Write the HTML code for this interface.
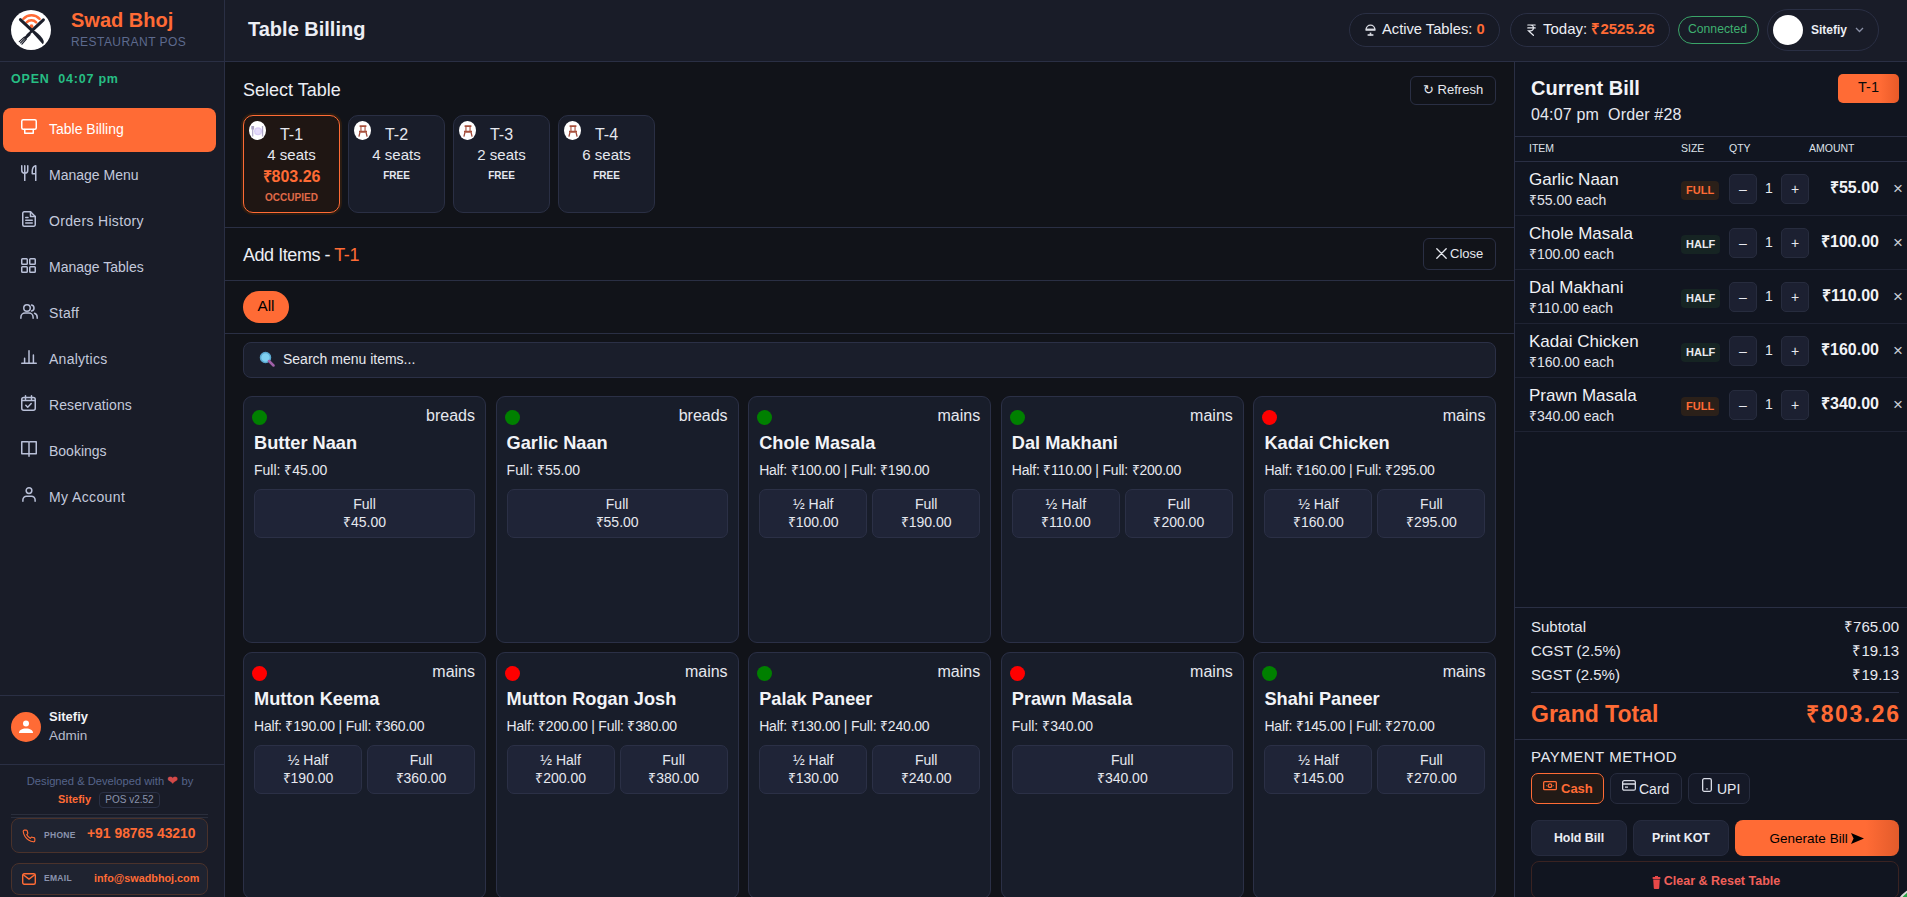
<!DOCTYPE html>
<html><head><meta charset="utf-8">
<style>
*{box-sizing:border-box;margin:0;padding:0}
html,body{width:1907px;height:897px;overflow:hidden;background:#111319;font-family:"Liberation Sans",sans-serif;color:#e6e8ef}
.abs{position:absolute}
#side{position:absolute;left:0;top:0;width:225px;height:897px;background:#191c28;border-right:1px solid #2a2f44}
#hdr{position:absolute;left:225px;top:0;width:1682px;height:62px;background:#191c28;border-bottom:1px solid #2a2f44}
#main{position:absolute;left:225px;top:62px;width:1290px;height:835px;background:#111319}
#right{position:absolute;left:1514px;top:62px;width:393px;height:835px;background:#111520;border-left:1px solid #2a2f44}
.nav{position:absolute;left:3px;width:213px;height:44px;border-radius:8px;color:#c3c9dc;font-size:14px}
.nav svg{position:absolute;left:18px;top:14px}
.nav span{position:absolute;left:46px;top:13px;line-height:16px}
.nav.act{background:#ff6b35;color:#fff}
.line{position:absolute;height:1px;background:#2a2f44}
.pill{position:absolute;border:1px solid #2a2f44;border-radius:20px}
.tcard{position:absolute;top:115px;width:97px;height:98px;border:1px solid #2a2f44;border-radius:10px;background:#191d2a;text-align:center}
.tcard .ic{position:absolute;left:5px;top:4.5px;width:17px;height:19.5px;border-radius:50%;background:#fff}
.tcard .tn{position:absolute;left:0;right:0;top:10px;font-size:16px;line-height:18px}
.tcard .ts{position:absolute;left:0;right:0;top:30px;font-size:15px;line-height:18px}
.tcard .tf{position:absolute;left:0;right:0;top:53.5px;font-size:10px;font-weight:bold;line-height:12px}
.mcard{position:absolute;width:243px;height:247px;border:1px solid #2b3046;border-radius:9px;background:#181d2a}
.mcard .dot{position:absolute;left:8px;top:13px;width:15px;height:15px;border-radius:50%;background:#008000}
.mcard .dot.nv{background:#ff0000}
.mcard .cat{position:absolute;right:10px;top:10px;font-size:16px;line-height:18px;color:#e6e8ef}
.mcard .nm{position:absolute;left:10px;top:34.5px;font-size:18.2px;font-weight:bold;line-height:22px;color:#f2f3f7}
.mcard .pr{position:absolute;left:10px;top:65px;font-size:14px;line-height:17px;color:#e6e8ef}
.mcard .opt{position:absolute;top:92px;height:49px;border:1px solid #2b3046;border-radius:7px;background:#1f2437;text-align:center;font-size:14px;line-height:18px;padding-top:4.5px;color:#e6e8ef}
.row{position:absolute;left:0;width:392px;height:54px;border-bottom:1px solid #1f2333}
.row .n{position:absolute;left:14px;top:9px;font-size:17px;line-height:18px;color:#f0f1f5}
.row .e{position:absolute;left:14px;top:30px;font-size:14px;line-height:16px;color:#e0e2ea}
.row .bd{position:absolute;left:166px;top:19px;height:19px;border-radius:4px;font-size:11px;font-weight:bold;line-height:19px;padding:0 5px}
.row .bd.f{background:#2b2019;color:#ff6b35}
.row .bd.h{background:#162423;color:#e8eaee}
.row .qb{position:absolute;top:12px;width:28px;height:30px;border:1px solid #272c3e;border-radius:5px;background:#1c2031;text-align:center;line-height:28px;font-size:14px;color:#e6e8ef}
.row .q{position:absolute;left:250px;top:18px;font-size:14px;line-height:16px}
.row .am{position:absolute;right:28px;top:17px;font-size:16px;font-weight:bold;line-height:18px;color:#f2f3f7}
.row .x{position:absolute;right:4px;top:18px;font-size:17px;line-height:18px;color:#c9ccd6}
.btn{position:absolute;border:1px solid #2a2f44;border-radius:6px}
</style></head><body>

<div id="side">
  <svg class="abs" style="left:11px;top:10px" width="40" height="40" viewBox="0 0 40 40">
<circle cx="20" cy="20" r="20" fill="#fff"/>
<g fill="none" stroke="#ff6b35" stroke-linecap="round"><path d="M12.4 8.8a11.2 11.2 0 0 1 16.2 0" stroke-width="2.5"/><path d="M15.6 12.3a6.7 6.7 0 0 1 9.6 0" stroke-width="2.5"/></g>
<circle cx="20.5" cy="16.2" r="1.9" fill="#ff6b35"/>
<g stroke="#1c1f2b" stroke-linecap="round" fill="none"><path d="M9.4 9.6L21.2 20.6" stroke-width="3"/><path d="M32.4 9.8L21.2 20.4" stroke-width="3"/><path d="M20.8 21.2L16.6 25.2" stroke-width="2.4"/></g>
<path d="M20.4 21.4L23.6 20.8C27.8 24 31.6 27.4 32.6 30.8C33 32.4 32.6 33.6 31.8 34.2Z" fill="#1c1f2b"/>
<path d="M17.8 22.8L19.8 24.8L14.8 29.6L12.8 27.6Z" fill="#1c1f2b"/>
<g stroke="#1c1f2b" stroke-width="1.25" stroke-linecap="round"><path d="M13.3 27.1L8.3 31.6M14.3 28.1L9.6 32.9M15.3 29.1L10.9 34.1"/></g>
</svg>

  <div class="abs" style="left:71px;top:7px;font-size:20px;font-weight:bold;color:#ff6b35;line-height:26px">Swad Bhoj</div>
  <div class="abs" style="left:71px;top:35px;font-size:12px;color:#5d6a8e;letter-spacing:0.45px;line-height:14px">RESTAURANT POS</div>
  <div class="line" style="left:0;top:61px;width:225px"></div>
  <div class="abs" style="left:11px;top:72px;font-size:12.5px;font-weight:bold;color:#27be84;letter-spacing:0.8px;line-height:14px">OPEN&nbsp; 04:07 pm</div>
  <div class="nav act" style="top:108px"><span>Table Billing</span></div>
  <div class="nav" style="top:154px"><span>Manage Menu</span></div>
  <div class="nav" style="top:200px"><span style="letter-spacing:0.33px">Orders History</span></div>
  <div class="nav" style="top:246px"><span>Manage Tables</span></div>
  <div class="nav" style="top:292px"><span style="letter-spacing:0.35px">Staff</span></div>
  <div class="nav" style="top:338px"><span style="letter-spacing:0.27px">Analytics</span></div>
  <div class="nav" style="top:384px"><span style="letter-spacing:0.10px">Reservations</span></div>
  <div class="nav" style="top:430px"><span>Bookings</span></div>
  <div class="nav" style="top:476px"><span style="letter-spacing:0.38px">My Account</span></div>
<svg class="abs" style="left:21px;top:119px" width="16" height="15" viewBox="0 0 16 15" fill="none" stroke="#fff" stroke-width="1.5" stroke-linecap="round" stroke-linejoin="round"><rect x="0.75" y="0.75" width="14.5" height="9.5" rx="1.5"/><path d="M3.75 10.5v3.75h8.5V10.5"/></svg>
<svg class="abs" style="left:21px;top:165px" width="16" height="16" viewBox="0 0 16 16" fill="none" stroke="#b9c0d8" stroke-width="1.5" stroke-linecap="round" stroke-linejoin="round"><path d="M0.75 0.75v4.5a3 3 0 0 0 6 0v-4.5M3.75 0.75V15.5M14.75 15.5V0.75c-2.2 0.6-3.5 2.6-3.5 5.5v2.5h3.5"/></svg>
<svg class="abs" style="left:22px;top:211px" width="14" height="16" viewBox="0 0 14 16" fill="none" stroke="#b9c0d8" stroke-width="1.5" stroke-linecap="round" stroke-linejoin="round"><path d="M0.75 2.25a1.5 1.5 0 0 1 1.5-1.5h6.25l4.75 4.75v8.25a1.5 1.5 0 0 1-1.5 1.5H2.25a1.5 1.5 0 0 1-1.5-1.5z"/><path d="M8.5 0.75v4.75h4.75M3.75 6.5h2.25M3.75 9.25h6.5M3.75 12h6.5"/></svg>
<svg class="abs" style="left:21px;top:258px" width="15" height="15" viewBox="0 0 15 15" fill="none" stroke="#b9c0d8" stroke-width="1.5" stroke-linecap="round" stroke-linejoin="round"><rect x="0.75" y="0.75" width="5.5" height="5.5" rx="0.8"/><rect x="8.75" y="0.75" width="5.5" height="5.5" rx="0.8"/><rect x="0.75" y="8.75" width="5.5" height="5.5" rx="0.8"/><rect x="8.75" y="8.75" width="5.5" height="5.5" rx="0.8"/></svg>
<svg class="abs" style="left:20px;top:304px" width="18" height="15" viewBox="0 0 18 15" fill="none" stroke="#b9c0d8" stroke-width="1.5" stroke-linecap="round" stroke-linejoin="round"><circle cx="7" cy="4" r="3.25"/><path d="M0.9 14.2v-0.9a4.2 4.2 0 0 1 4.2-4.2h3.8a4.2 4.2 0 0 1 4.2 4.2v0.9M11.6 0.9a3.2 3.2 0 0 1 0 6.2M14.6 9.3a4.2 4.2 0 0 1 2.6 3.9v1"/></svg>
<svg class="abs" style="left:21px;top:350px" width="16" height="14" viewBox="0 0 16 14" fill="none" stroke="#b9c0d8" stroke-width="1.5" stroke-linecap="round" stroke-linejoin="round"><path d="M0.75 13.25h14.5M3.6 13V8.2M8 13V0.75M12.4 13V5"/></svg>
<svg class="abs" style="left:21px;top:395px" width="15" height="16" viewBox="0 0 15 16" fill="none" stroke="#b9c0d8" stroke-width="1.5" stroke-linecap="round" stroke-linejoin="round"><rect x="0.75" y="2.5" width="13.5" height="12.75" rx="2"/><path d="M4.5 0.75v3.5M10.5 0.75v3.5M0.75 5.5h13.5M4.8 10.3l1.9 1.9 3.5-3.6"/></svg>
<svg class="abs" style="left:21px;top:441px" width="16" height="16" viewBox="0 0 16 16" fill="none" stroke="#b9c0d8" stroke-width="1.5" stroke-linecap="round" stroke-linejoin="round"><path d="M0.75 0.75h6.4a0.85 0.85 0 0 1 0.85 0.85v13.65M15.25 0.75H8.85a0.85 0.85 0 0 0-0.85 0.85M0.75 0.75v11.9h14.5V0.75"/></svg>
<svg class="abs" style="left:22px;top:487px" width="14" height="15" viewBox="0 0 14 15" fill="none" stroke="#b9c0d8" stroke-width="1.5" stroke-linecap="round" stroke-linejoin="round"><circle cx="7" cy="3.6" r="2.85"/><path d="M0.9 14.2v-1.4a3.6 3.6 0 0 1 3.6-3.6h5a3.6 3.6 0 0 1 3.6 3.6v1.4"/></svg>

  <div class="line" style="left:0;top:695px;width:225px"></div>
  <div class="abs" style="left:11px;top:712px;width:30px;height:30px;border-radius:50%;background:#ff6b35"><svg style="position:absolute;left:7px;top:8px" width="16" height="14" viewBox="0 0 16 14" fill="#fff"><circle cx="8" cy="3.5" r="3"/><path d="M1 13c0-3 3-4.5 7-4.5s7 1.5 7 4.5z"/></svg></div>
  <div class="abs" style="left:49px;top:709px;font-size:13px;font-weight:bold;line-height:16px;color:#f2f3f7">Sitefiy</div>
  <div class="abs" style="left:49px;top:728px;font-size:13.5px;line-height:16px;color:#b8bccb">Admin</div>
  <div class="line" style="left:0;top:764px;width:225px"></div>
  <div class="abs" style="left:0;top:775px;width:220px;text-align:center;font-size:11.2px;line-height:13px;color:#56648a">Designed &amp; Developed with <span style="color:#d24a4a;font-size:13px;line-height:10px">&#10084;</span> by</div>
  <div class="abs" style="left:58px;top:793px;font-size:11px;font-weight:bold;line-height:13px;color:#ff6b35">Sitefiy</div>
  <div class="abs" style="left:99px;top:792px;width:61px;height:16px;border:1px solid #2a3045;border-radius:4px;font-size:10px;line-height:14px;text-align:center;color:#8a93ad">POS v2.52</div>
  <div class="line" style="left:11px;top:814px;width:197px;background:#2a2e3c"></div><div class="line" style="left:11px;top:817px;width:197px;background:#2a2e3c"></div>
  <div class="abs" style="left:11px;top:818px;width:197px;height:35px;border:1px solid #4a322b;border-radius:8px;background:#1f2330"></div>
  <svg class="abs" style="left:22px;top:829px" width="14" height="14" viewBox="0 0 24 24" fill="none" stroke="#ff6b35" stroke-width="2" stroke-linecap="round" stroke-linejoin="round"><path d="M22 16.92v3a2 2 0 0 1-2.18 2 19.79 19.79 0 0 1-8.63-3.07 19.5 19.5 0 0 1-6-6 19.79 19.79 0 0 1-3.07-8.67A2 2 0 0 1 4.11 2h3a2 2 0 0 1 2 1.72 12.84 12.84 0 0 0 .7 2.81 2 2 0 0 1-.45 2.11L8.09 9.91a16 16 0 0 0 6 6l1.27-1.27a2 2 0 0 1 2.11-.45 12.84 12.84 0 0 0 2.81.7A2 2 0 0 1 22 16.92z"/></svg><div class="abs" style="left:44px;top:830px;font-size:8.5px;font-weight:bold;line-height:10px;color:#8a93ad;letter-spacing:0.3px">PHONE</div>
  <div class="abs" style="left:87px;top:826px;font-size:13.9px;font-weight:bold;line-height:15px;color:#ff6b35">+91 98765 43210</div>
  <div class="abs" style="left:11px;top:863px;width:197px;height:32px;border:1px solid #4a322b;border-radius:8px;background:#1f2330"></div>
  <svg class="abs" style="left:22px;top:873px" width="14" height="12" viewBox="0 0 14 12" fill="none" stroke="#ff6b35" stroke-width="1.4" stroke-linejoin="round"><rect x="0.7" y="0.7" width="12.6" height="10.6" rx="1.5"/><path d="M0.9 1.5l6.1 4.6 6.1-4.6"/></svg><div class="abs" style="left:44px;top:873px;font-size:8.5px;font-weight:bold;line-height:10px;color:#8a93ad;letter-spacing:0.3px">EMAIL</div>
  <div class="abs" style="left:94px;top:871px;font-size:10.8px;font-weight:bold;line-height:14px;color:#ff6b35">info@swadbhoj.com</div>
</div>

<div id="hdr">
  <div class="abs" style="left:23px;top:15.5px;font-size:20px;font-weight:bold;line-height:26px;color:#eceef4">Table Billing</div>

  <div class="pill" style="left:1124px;top:13px;width:151px;height:34px;background:#171a25"></div>
  <svg class="abs" style="left:1140px;top:23px" width="11" height="13" viewBox="0 0 11 13"><path d="M1.2 6.5A4.3 4.3 0 0 1 9.8 6.5" fill="none" stroke="#d8dae2" stroke-width="1.3"/><rect x="0.5" y="5.6" width="10" height="2.2" fill="#d8dae2"/><rect x="4.7" y="9.6" width="1.6" height="3" fill="#d8dae2"/><rect x="2.6" y="11.2" width="5.8" height="1.6" fill="#d8dae2"/></svg>
  <div class="abs" style="left:1157px;top:19.5px;font-size:14.7px;line-height:18px;color:#eceef4;white-space:nowrap">Active Tables: <b style="color:#ff6b35">0</b></div>
  <div class="pill" style="left:1285px;top:13px;width:160px;height:34px;background:#171a25"></div>
  <svg class="abs" style="left:1302px;top:23.5px" width="9" height="12" viewBox="0 0 9 12" fill="none" stroke="#eceef4" stroke-width="1.2" stroke-linecap="round"><path d="M0.8 1h7.4M0.8 3.9h7.4M3 1c2.4 0 3.4 1.3 3.4 2.9S5.2 6.8 3 6.8H1.4l5 4.5"/></svg>
  <div class="abs" style="left:1318px;top:19.5px;font-size:15px;line-height:18px;color:#eceef4;white-space:nowrap">Today: <b style="color:#ff6b35">&#8377;2525.26</b></div>
  <div class="pill" style="left:1453px;top:16px;width:81px;height:28px;border-color:#3aa468"></div>
  <div class="abs" style="left:1463px;top:21px;font-size:12.2px;line-height:16px;color:#3fb070">Connected</div>
  <div class="pill" style="left:1542px;top:9px;width:112px;height:42px;border-radius:21px"></div>
  <div class="abs" style="left:1548px;top:15px;width:30px;height:30px;border-radius:50%;background:#fff"></div>
  <div class="abs" style="left:1586px;top:22px;font-size:12px;font-weight:bold;line-height:16px;color:#eceef4">Sitefiy</div>
  <svg class="abs" style="left:1630px;top:27px" width="9" height="6" viewBox="0 0 9 6" fill="none" stroke="#8a90a6" stroke-width="1.3"><path d="M1 1l3.5 3.5L8 1"/></svg>
</div>

<div id="main"><div class="abs" style="left:18px;top:17px;font-size:18px;line-height:22px;color:#eceef4">Select Table</div><div class="btn" style="left:1185px;top:14px;width:86px;height:29px"></div><div class="abs" style="left:1198px;top:20px;font-size:13px;line-height:16px;color:#e6e8ef">&#8635; Refresh</div><div class="tcard" style="left:18px;top:53px;background:#1f1613;border:1.5px solid #ff6b35;box-shadow:0 0 0 2px #2a1c12"><div class="ic" style="left:4.5px"><svg style="position:absolute;left:2px;top:5px" width="13" height="11" viewBox="0 0 13 11"><rect x="0.3" y="0" width="2.8" height="3.5" fill="#a9a0c0"/><rect x="1.1" y="3" width="1.2" height="7.5" fill="#b0a8c8"/><circle cx="7" cy="5.3" r="4" fill="#d9cdf5"/><circle cx="7" cy="5.3" r="2.6" fill="#e6dcfa"/><rect x="10.9" y="0" width="1.3" height="10.5" fill="#b0a8c8"/></svg></div><div class="tn">T-1</div><div class="ts">4 seats</div><div class="abs" style="left:0;right:0;top:52px;font-size:16px;font-weight:bold;line-height:18px;color:#ff6b35">&#8377;803.26</div><div class="abs" style="left:0;right:0;top:76px;font-size:10px;font-weight:bold;line-height:12px;color:#e06a48">OCCUPIED</div></div><div class="tcard" style="left:123px;top:53px"><div class="ic"><svg style="position:absolute;left:3.5px;top:4px" width="10" height="12" viewBox="0 0 10 12"><path d="M1.6 0.3h6.8v1.8H1.6z M2.4 2h1.1v4H2.4z M6.5 2h1.1v4H6.5z M1 5.7h8v2.1H1z" fill="#a8503c"/><path d="M1.9 7.6L0.9 11.6 M8.1 7.6l1 4" stroke="#a04a3a" stroke-width="1.3"/></svg></div><div class="tn">T-2</div><div class="ts">4 seats</div><div class="tf">FREE</div></div><div class="tcard" style="left:228px;top:53px"><div class="ic"><svg style="position:absolute;left:3.5px;top:4px" width="10" height="12" viewBox="0 0 10 12"><path d="M1.6 0.3h6.8v1.8H1.6z M2.4 2h1.1v4H2.4z M6.5 2h1.1v4H6.5z M1 5.7h8v2.1H1z" fill="#a8503c"/><path d="M1.9 7.6L0.9 11.6 M8.1 7.6l1 4" stroke="#a04a3a" stroke-width="1.3"/></svg></div><div class="tn">T-3</div><div class="ts">2 seats</div><div class="tf">FREE</div></div><div class="tcard" style="left:333px;top:53px"><div class="ic"><svg style="position:absolute;left:3.5px;top:4px" width="10" height="12" viewBox="0 0 10 12"><path d="M1.6 0.3h6.8v1.8H1.6z M2.4 2h1.1v4H2.4z M6.5 2h1.1v4H6.5z M1 5.7h8v2.1H1z" fill="#a8503c"/><path d="M1.9 7.6L0.9 11.6 M8.1 7.6l1 4" stroke="#a04a3a" stroke-width="1.3"/></svg></div><div class="tn">T-4</div><div class="ts">6 seats</div><div class="tf">FREE</div></div><div class="line" style="left:0;top:165px;width:1289px"></div><div class="abs" style="left:18px;top:182px;font-size:18px;letter-spacing:-0.45px;line-height:22px;color:#eceef4">Add Items - <span style="color:#ff6b35">T-1</span></div><div class="btn" style="left:1198px;top:176px;width:73px;height:32px"></div><svg class="abs" style="left:1211px;top:186px" width="11" height="11" viewBox="0 0 11 11" stroke="#e6e8ef" stroke-width="1.3" stroke-linecap="round"><path d="M0.8 0.8l9.4 9.4M10.2 0.8L0.8 10.2"/></svg><div class="abs" style="left:1225px;top:184px;font-size:13px;line-height:16px;color:#e6e8ef">Close</div><div class="line" style="left:0;top:218px;width:1289px"></div><div class="abs" style="left:18px;top:229px;width:46px;height:32px;border-radius:16px;background:#ff6b35;color:#000;font-size:15.3px;line-height:30px;text-align:center">All</div><div class="line" style="left:0;top:271px;width:1289px"></div><div class="abs" style="left:18px;top:280px;width:1253px;height:36px;border:1px solid #2b3046;border-radius:8px;background:#1a1e2b"></div><svg class="abs" style="left:33.5px;top:289px" width="16" height="16" viewBox="0 0 16 16"><circle cx="6.5" cy="6.5" r="5" fill="#7fd0f0" stroke="#5aa8d0" stroke-width="1.5"/><path d="M10 10l4.5 4.5" stroke="#a060a8" stroke-width="2.5" stroke-linecap="round"/></svg><div class="abs" style="left:58px;top:288px;font-size:14px;line-height:18px;color:#e6e8ef">Search menu items...</div><div class="mcard" style="left:18.0px;top:334px"><div class="dot"></div><div class="cat">breads</div><div class="nm">Butter Naan</div><div class="pr">Full: &#8377;45.00</div><div class="opt" style="left:10px;width:221px">Full<br>&#8377;45.00</div></div><div class="mcard" style="left:270.6px;top:334px"><div class="dot"></div><div class="cat">breads</div><div class="nm">Garlic Naan</div><div class="pr">Full: &#8377;55.00</div><div class="opt" style="left:10px;width:221px">Full<br>&#8377;55.00</div></div><div class="mcard" style="left:523.2px;top:334px"><div class="dot"></div><div class="cat">mains</div><div class="nm">Chole Masala</div><div class="pr" style="letter-spacing:-0.2px">Half: &#8377;100.00 | Full: &#8377;190.00</div><div class="opt" style="left:10px;width:108px">&frac12; Half<br>&#8377;100.00</div><div class="opt" style="left:123px;width:108px">Full<br>&#8377;190.00</div></div><div class="mcard" style="left:775.8px;top:334px"><div class="dot"></div><div class="cat">mains</div><div class="nm">Dal Makhani</div><div class="pr" style="letter-spacing:-0.2px">Half: &#8377;110.00 | Full: &#8377;200.00</div><div class="opt" style="left:10px;width:108px">&frac12; Half<br>&#8377;110.00</div><div class="opt" style="left:123px;width:108px">Full<br>&#8377;200.00</div></div><div class="mcard" style="left:1028.4px;top:334px"><div class="dot nv"></div><div class="cat">mains</div><div class="nm">Kadai Chicken</div><div class="pr" style="letter-spacing:-0.2px">Half: &#8377;160.00 | Full: &#8377;295.00</div><div class="opt" style="left:10px;width:108px">&frac12; Half<br>&#8377;160.00</div><div class="opt" style="left:123px;width:108px">Full<br>&#8377;295.00</div></div><div class="mcard" style="left:18.0px;top:590px"><div class="dot nv"></div><div class="cat">mains</div><div class="nm">Mutton Keema</div><div class="pr" style="letter-spacing:-0.2px">Half: &#8377;190.00 | Full: &#8377;360.00</div><div class="opt" style="left:10px;width:108px">&frac12; Half<br>&#8377;190.00</div><div class="opt" style="left:123px;width:108px">Full<br>&#8377;360.00</div></div><div class="mcard" style="left:270.6px;top:590px"><div class="dot nv"></div><div class="cat">mains</div><div class="nm">Mutton Rogan Josh</div><div class="pr" style="letter-spacing:-0.2px">Half: &#8377;200.00 | Full: &#8377;380.00</div><div class="opt" style="left:10px;width:108px">&frac12; Half<br>&#8377;200.00</div><div class="opt" style="left:123px;width:108px">Full<br>&#8377;380.00</div></div><div class="mcard" style="left:523.2px;top:590px"><div class="dot"></div><div class="cat">mains</div><div class="nm">Palak Paneer</div><div class="pr" style="letter-spacing:-0.2px">Half: &#8377;130.00 | Full: &#8377;240.00</div><div class="opt" style="left:10px;width:108px">&frac12; Half<br>&#8377;130.00</div><div class="opt" style="left:123px;width:108px">Full<br>&#8377;240.00</div></div><div class="mcard" style="left:775.8px;top:590px"><div class="dot nv"></div><div class="cat">mains</div><div class="nm">Prawn Masala</div><div class="pr">Full: &#8377;340.00</div><div class="opt" style="left:10px;width:221px">Full<br>&#8377;340.00</div></div><div class="mcard" style="left:1028.4px;top:590px"><div class="dot"></div><div class="cat">mains</div><div class="nm">Shahi Paneer</div><div class="pr" style="letter-spacing:-0.2px">Half: &#8377;145.00 | Full: &#8377;270.00</div><div class="opt" style="left:10px;width:108px">&frac12; Half<br>&#8377;145.00</div><div class="opt" style="left:123px;width:108px">Full<br>&#8377;270.00</div></div></div>
<div id="right"><div class="abs" style="left:16px;top:14px;font-size:20px;font-weight:bold;line-height:24px;color:#f2f3f7">Current Bill</div><div class="abs" style="left:323px;top:12px;width:61px;height:29px;border-radius:5px;background:linear-gradient(90deg,#ff6b35 70%,#e85a28);color:#0a0a0a;font-size:14.5px;line-height:26px;text-align:center">T-1</div><div class="abs" style="left:16px;top:44px;font-size:16px;letter-spacing:0.15px;line-height:18px;color:#e6e8ef;white-space:pre">04:07 pm  Order #28</div><div class="line" style="left:0;top:74px;width:392px"></div><div class="abs" style="left:14px;top:79px;font-size:10.5px;line-height:14px;color:#dfe2ea">ITEM</div><div class="abs" style="left:166px;top:79px;font-size:10.5px;line-height:14px;color:#dfe2ea">SIZE</div><div class="abs" style="left:214px;top:79px;font-size:10.5px;line-height:14px;color:#dfe2ea">QTY</div><div class="abs" style="left:294px;top:79px;font-size:10.5px;line-height:14px;color:#dfe2ea">AMOUNT</div><div class="line" style="left:0;top:99px;width:392px"></div><div class="row" style="top:100px"><div class="n">Garlic Naan</div><div class="e">&#8377;55.00 each</div><div class="bd f">FULL</div><div class="qb" style="left:214px">&ndash;</div><div class="q">1</div><div class="qb" style="left:266px">+</div><div class="am">&#8377;55.00</div><div class="x">&times;</div></div><div class="row" style="top:154px"><div class="n">Chole Masala</div><div class="e">&#8377;100.00 each</div><div class="bd h">HALF</div><div class="qb" style="left:214px">&ndash;</div><div class="q">1</div><div class="qb" style="left:266px">+</div><div class="am">&#8377;100.00</div><div class="x">&times;</div></div><div class="row" style="top:208px"><div class="n">Dal Makhani</div><div class="e">&#8377;110.00 each</div><div class="bd h">HALF</div><div class="qb" style="left:214px">&ndash;</div><div class="q">1</div><div class="qb" style="left:266px">+</div><div class="am">&#8377;110.00</div><div class="x">&times;</div></div><div class="row" style="top:262px"><div class="n">Kadai Chicken</div><div class="e">&#8377;160.00 each</div><div class="bd h">HALF</div><div class="qb" style="left:214px">&ndash;</div><div class="q">1</div><div class="qb" style="left:266px">+</div><div class="am">&#8377;160.00</div><div class="x">&times;</div></div><div class="row" style="top:316px"><div class="n">Prawn Masala</div><div class="e">&#8377;340.00 each</div><div class="bd f">FULL</div><div class="qb" style="left:214px">&ndash;</div><div class="q">1</div><div class="qb" style="left:266px">+</div><div class="am">&#8377;340.00</div><div class="x">&times;</div></div><div class="line" style="left:0;top:545px;width:392px"></div><div class="abs" style="left:16px;top:556px;width:368px;font-size:15px;line-height:18px;color:#e6e8ef">Subtotal<span style="float:right">&#8377;765.00</span></div><div class="abs" style="left:16px;top:580px;width:368px;font-size:15px;line-height:18px;color:#e6e8ef">CGST (2.5%)<span style="float:right">&#8377;19.13</span></div><div class="abs" style="left:16px;top:604px;width:368px;font-size:15px;line-height:18px;color:#e6e8ef">SGST (2.5%)<span style="float:right">&#8377;19.13</span></div><div class="line" style="left:16px;top:630px;width:368px"></div><div class="abs" style="left:16px;top:638.5px;width:368px;font-size:23px;font-weight:bold;line-height:26px;color:#ff6b35">Grand Total<span style="float:right;letter-spacing:1.6px;margin-right:-1.6px">&#8377;803.26</span></div><div class="line" style="left:0;top:677px;width:392px"></div><div class="abs" style="left:16px;top:686px;font-size:15px;line-height:18px;letter-spacing:0.5px;color:#e6e8ef">PAYMENT METHOD</div><div class="abs" style="left:16px;top:711px;width:73px;height:31px;border:1.5px solid #ff6b35;border-radius:7px;background:#221a16"></div><div class="abs" style="left:46px;top:718px;font-size:13px;font-weight:bold;line-height:18px;color:#ff6b35">Cash</div><svg class="abs" style="left:28px;top:719px" width="14" height="10" viewBox="0 0 14 10" fill="none" stroke="#ff6b35" stroke-width="1.3"><rect x="0.65" y="0.65" width="12.7" height="8" rx="1"/><circle cx="7" cy="4.65" r="1.8"/><path d="M3 4.65h0.6M10.4 4.65h0.6"/></svg><div class="abs" style="left:95px;top:711px;width:72px;height:31px;border:1px solid #272c3e;border-radius:7px;background:#151927"></div><div class="abs" style="left:124px;top:718px;font-size:14px;line-height:18px;color:#e6e8ef">Card</div><svg class="abs" style="left:107px;top:718px" width="14" height="11" viewBox="0 0 14 11" fill="none" stroke="#d9dce6" stroke-width="1.3"><rect x="0.65" y="0.65" width="12.7" height="9.5" rx="1.5"/><path d="M0.65 4h12.7M3 7.2h3"/></svg><div class="abs" style="left:173px;top:711px;width:62px;height:31px;border:1px solid #272c3e;border-radius:7px;background:#151927"></div><div class="abs" style="left:202px;top:718px;font-size:14px;line-height:18px;color:#e6e8ef">UPI</div><svg class="abs" style="left:187px;top:716px" width="10" height="14" viewBox="0 0 10 14" fill="none" stroke="#d9dce6" stroke-width="1.3"><rect x="0.65" y="0.65" width="8.7" height="12.7" rx="1.5"/><path d="M4.3 10.8h1.4"/></svg><div class="abs" style="left:16px;top:758px;width:96px;height:36px;border:1px solid #262b3e;border-radius:8px;background:#1d2233;font-size:12.4px;font-weight:bold;line-height:34px;text-align:center;color:#eceef4">Hold Bill</div><div class="abs" style="left:118px;top:758px;width:96px;height:36px;border:1px solid #262b3e;border-radius:8px;background:#1d2233;font-size:12.4px;font-weight:bold;line-height:34px;text-align:center;color:#eceef4">Print KOT</div><div class="abs" style="left:220px;top:758px;width:164px;height:36px;border-radius:8px;background:linear-gradient(90deg,#ff6b35 80%,#e25b2b);font-size:13.5px;line-height:37px;text-align:center;color:#000;padding-right:0px">Generate Bill <svg width="13" height="11" viewBox="0 0 13 11" style="vertical-align:-1px"><path d="M0 0L13 5.5L0 11L2.6 5.5Z" fill="#000"/></svg></div><div class="abs" style="left:16px;top:799px;width:368px;height:38px;border:1px solid #3a2322;border-radius:8px;text-align:center;padding-top:12px;padding-left:14px;font-size:12.5px;font-weight:bold;color:#f0605a"><svg style="position:absolute;left:120px;top:14px" width="9" height="13" viewBox="0 0 9 13"><rect x="0.5" y="1" width="8" height="2" rx="0.8" fill="#e84848"/><rect x="3" y="0" width="3" height="1.5" fill="#e84848"/><path d="M1.2 3.6h6.6l-0.6 8.6a0.9 0.9 0 0 1-0.9 0.8H2.7a0.9 0.9 0 0 1-0.9-0.8z" fill="#e84848"/></svg>Clear &amp; Reset Table</div></div>

<div class="abs" style="left:1893px;top:886px;width:60px;height:60px;border-radius:50%;background:#25a244;border:2px solid #d8d8d8"></div>
</body></html>
